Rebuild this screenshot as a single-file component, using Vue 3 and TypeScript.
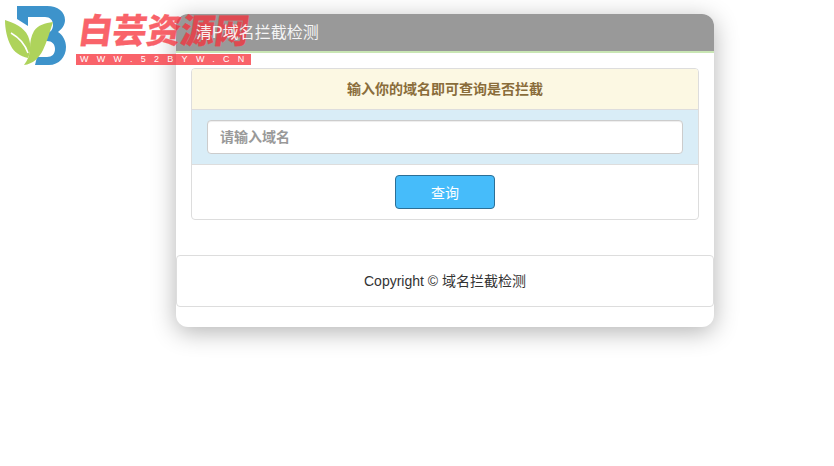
<script setup lang="ts">
const title = '清P域名拦截检测'
const tip = '输入你的域名即可查询是否拦截'
const placeholder = '请输入域名'
</script>

<template>
  <div class="page">
    <div class="card">
      <div class="card__head"><span class="card__title">{{ title }}</span></div>
      <div class="card__body">
        <div class="panel">
          <div class="panel__tip">{{ tip }}</div>
          <div class="panel__field">
            <input class="field" type="text" :placeholder="placeholder">
          </div>
          <div class="panel__action">
            <button class="btn" type="button">查询</button>
          </div>
        </div>
      </div>
      <div class="copy">Copyright © 域名拦截检测</div>
    </div>

    <div class="logo">
      <svg class="logo__mark" width="68" height="68" viewBox="0 0 68 68">
        <path d="M17 6H47C58 6 65 12 65 20C65 25 62 29 58 32C63 35 66 41 66 47C66 57 59 65 49 65H35L37 57H47C52 57 55 54 55 49C55 44 52 41 47 41H41V33H46C50 33 53 30 53 25C53 20 50 17 45 17H28V26L17 19Z" fill="#3d93cb" />
        <path d="M5 20C14 23 24 27 28 36C31 43 31 51 28 58C20 56 14 52 11 46C7 39 5 29 5 20Z" fill="#aed35b" />
        <path d="M53 22C45 23 38 25 34 31C31 36 30 42 30 48C30 54 28 60 24 65C33 64 39 58 43 50C47 42 50 31 53 22Z" fill="#aed35b" />
        <path d="M11 33C18 37 25 44 28 53" fill="none" stroke="#fff" stroke-width="1.500" />
      </svg>
      <div class="logo__text">
        <div class="logo__name">白芸资源网</div>
        <div class="logo__url">WWW.52BYW.CN</div>
      </div>
    </div>
  </div>
</template>

<style scoped>
.page {
  position: relative;
  height: 466px;
  padding: 14px 0 0 176px;
  box-sizing: border-box;
  background: #fff;
  overflow: hidden;
  font-family: "Liberation Sans", "Noto Sans CJK SC", sans-serif;
  font-size: 14px;
  color: #333;
}

.card {
  width: 538px;
  height: 313px;
  border-radius: 12px;
  background: #fff;
  box-shadow: 0 5px 25px rgba(0, 0, 0, 0.3);
  overflow: hidden;
}

.card__head {
  height: 37px;
  padding-left: 20px;
  line-height: 37px;
  font-size: 16px;
  color: #fff;
  background: #999;
  border-bottom: 2px solid #c9e6b4;
}

/* title sits over the logo, which overlaps the header */
.card__title {
  position: relative;
  z-index: 2;
  opacity: 0.9;
}

.card__body {
  padding: 15px 15px 0;
}

.panel {
  border: 1px solid #ddd;
  border-radius: 4px;
  overflow: hidden;
}

.panel__tip {
  height: 40px;
  line-height: 40px;
  text-align: center;
  font-weight: 700;
  color: #8a6d3b;
  background: #fcf8e3;
  border-bottom: 1px solid #ddd;
}

.panel__field {
  padding: 10px 15px;
  background: #d9edf7;
  border-bottom: 1px solid #ddd;
}

.field {
  display: block;
  width: 100%;
  height: 34px;
  padding: 0 12px;
  box-sizing: border-box;
  border: 1px solid #ccc;
  border-radius: 4px;
  font: inherit;
  font-weight: 700;
  color: #555;
  background: #fff;
  outline: none;
  box-shadow: inset 0 1px 1px rgba(0, 0, 0, 0.075);
}

.field::placeholder {
  color: #999;
}

.panel__action {
  display: flex;
  justify-content: center;
  padding: 10px 0;
}

.btn {
  width: 100px;
  height: 34px;
  padding: 0;
  border: 1px solid #2c6f96;
  border-radius: 4px;
  font: inherit;
  color: #fff;
  background: #46bcfa;
}

.copy {
  height: 50px;
  margin-top: 35px;
  line-height: 50px;
  text-align: center;
  border: 1px solid #ddd;
  border-radius: 4px;
}

.logo {
  position: absolute;
  top: 0;
  left: 0;
  z-index: 1;
}

.logo__mark {
  display: block;
}

.logo__text {
  position: absolute;
  top: 11px;
  left: 76px;
  width: 175px;
  opacity: 0.75;
}

.logo__name {
  height: 41px;
  line-height: 41px;
  font-size: 34px;
  font-weight: 900;
  white-space: nowrap;
  color: #f72f39;
  -webkit-text-stroke: 0.3px #f72f39;
  transform: skewX(-8deg);
  transform-origin: left bottom;
}

.logo__url {
  display: flex;
  justify-content: space-between;
  height: 11px;
  padding: 0 4px;
  margin-top: 2px;
  line-height: 11px;
  font-size: 9px;
  letter-spacing: 8.300px;
  white-space: nowrap;
  color: #fff;
  background: #f72f39;
}
</style>
